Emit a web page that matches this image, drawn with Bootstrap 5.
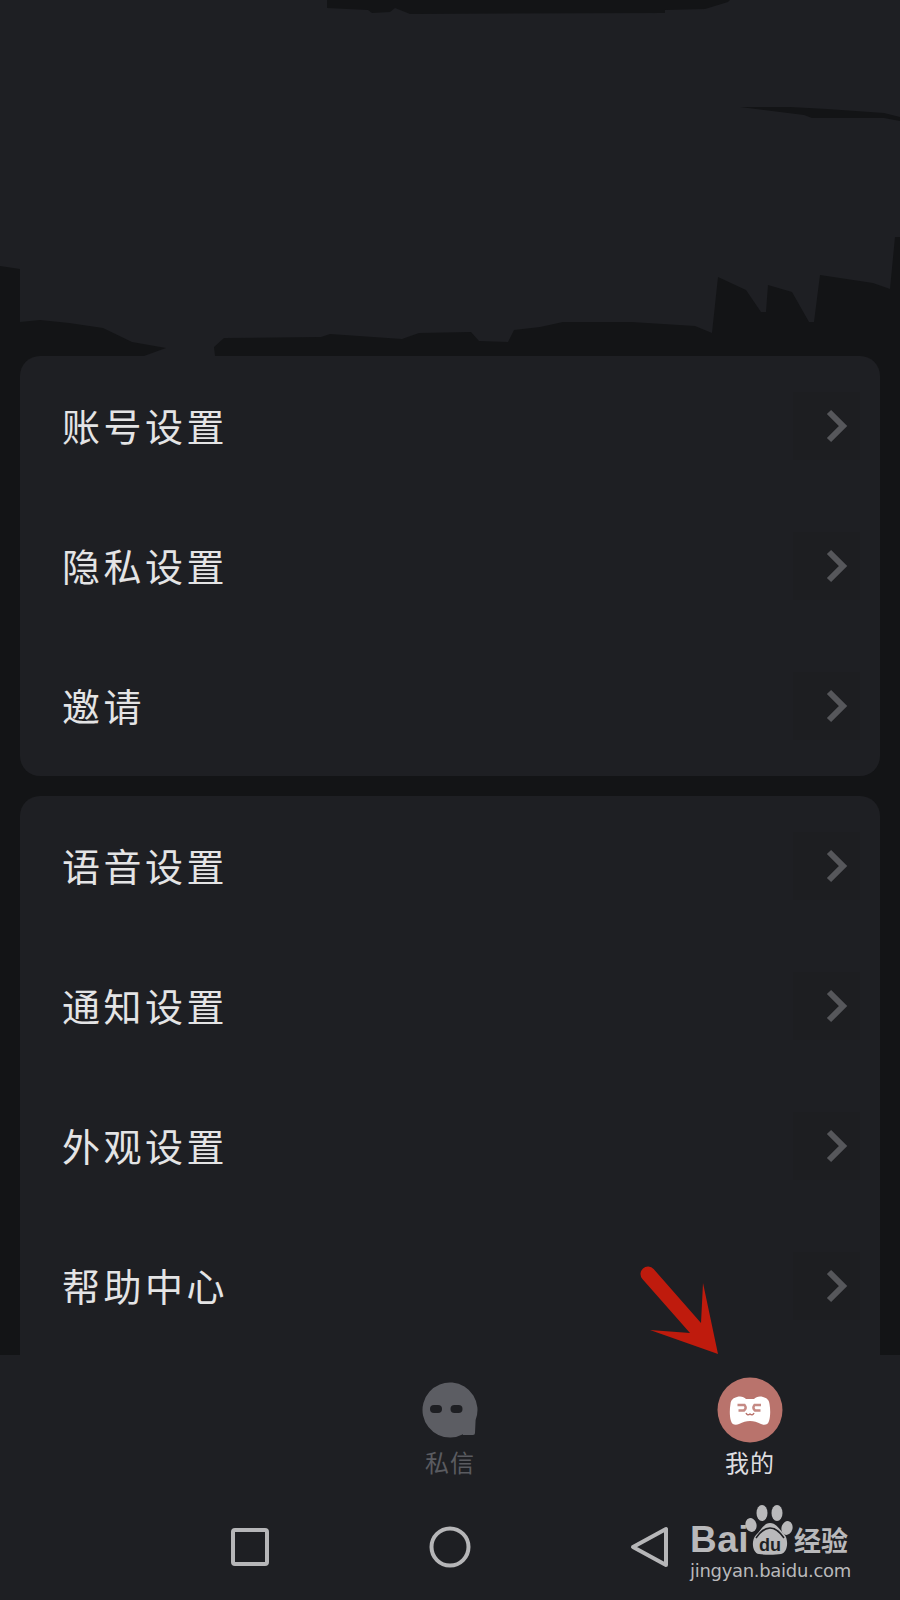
<!DOCTYPE html>
<html lang="zh-CN">
<head>
  <meta charset="UTF-8">
  <meta name="viewport" content="width=device-width, initial-scale=1.0">
  <title>设置</title>
  <link href="https://cdn.jsdelivr.net/npm/bootstrap@5.3.0/dist/css/bootstrap.min.css" rel="stylesheet">
  <style>
    body {
      background-color: #131416;
      font-family: "Noto Sans CJK SC", "Liberation Sans", sans-serif;
      height: 1600px;
      overflow: hidden;
    }
    .cover-art {
      display: block;
      width: 900px;
      height: 356px;
    }
    .menu-group {
      --bs-list-group-bg: #1e1f23;
      --bs-list-group-color: #e4e4e5;
      --bs-list-group-border-width: 0;
      --bs-list-group-border-radius: 20px;
      --bs-list-group-item-padding-x: 0;
      --bs-list-group-item-padding-y: 0;
      margin: 0 20px 20px;
    }
    /* second group runs on under the bottom bar */
    .menu-group-open {
      border-bottom-left-radius: 0;
      border-bottom-right-radius: 0;
    }
    .menu-row {
      height: 140px;
      padding-left: 42px !important;
      padding-right: 20px !important;
      font-size: 38px;
      letter-spacing: 3.5px;
      line-height: 1;
    }
    .menu-row span {
      margin-bottom: 2px;
    }
    .chevron-box {
      width: 67px;
      height: 68px;
      background-color: #1d1e21;
    }
    .chevron-box svg {
      display: block;
      width: 24px;
      height: 34px;
      margin-left: 20px;
    }
    .page-body {
      height: 1355px;
      overflow: hidden;
    }
    .bottom-bar {
      background-color: #1e1f23;
      height: 245px;
    }
    .tab-row {
      padding-top: 22px;
    }
    .tab-item {
      width: 300px;
    }
    .tab-icon {
      display: block;
      width: 66px;
      height: 66px;
    }
    .tab-label {
      font-size: 24px;
      line-height: 30px;
      margin-top: 4px;
      letter-spacing: 1px;
      color: #5a5b60;
    }
    .tab-label-on {
      color: #dedee0;
    }
    .soft-keys {
      padding-top: 48px;
    }
    .soft-key {
      width: 200px;
    }
    .soft-key svg {
      display: block;
      width: 44px;
      height: 44px;
    }
    .pointer-arrow {
      position: absolute;
      left: 635px;
      top: 1260px;
      width: 100px;
      height: 100px;
    }
    .watermark {
      position: absolute;
      left: 685px;
      top: 1500px;
      width: 175px;
      height: 90px;
      color: #b9b9bb;
    }
    .wm-bai {
      position: absolute;
      left: 5px;
      top: 18px;
      font: 700 37px/44px "Liberation Sans", sans-serif;
      letter-spacing: 0.5px;
    }
    .wm-paw {
      position: absolute;
      left: 58px;
      top: 3px;
      width: 54px;
      height: 54px;
    }
    .wm-du {
      position: absolute;
      left: 74px;
      top: 34px;
      width: 30px;
      font: 700 18px/22px "Liberation Sans", sans-serif;
      color: #1e1f23;
    }
    .wm-cn {
      position: absolute;
      left: 109px;
      top: 22px;
      font-size: 27px;
      line-height: 36px;
      font-weight: 700;
    }
    .wm-url {
      position: absolute;
      left: 5px;
      top: 58px;
      font: 400 18px/26px "DejaVu Sans", sans-serif;
      letter-spacing: -0.3px;
      white-space: nowrap;
    }
  </style>
</head>
<body>
  <div class="page-body">
    <svg class="cover-art" viewBox="0 0 900 356" aria-hidden="true">
      <rect width="900" height="356" fill="#1e1f23"/>
      <path fill="#131416" d="M327 0V8L368 10 372 13 390 12 395 8 410 14 665 13 665 10 705 9 728 2 730 0Z"/>
      <path fill="#131416" d="M740 107 804 115 812 118 884 118 900 121V117L884 113 827 109 790 107Z"/>
      <path fill="#131416" d="M0 266 20 269V322L40 320 69 323 103 328 132 342 166 348 144 356H215L214 347 224 338 321 337 330 334 402 339 419 333 471 332 479 341 508 342 514 330 540 327 563 322 631 322 695 326 712 333 718 277 746 290 761 312 766 312 768 285 792 292 809 322 814 322 820 275 873 283 890 289 895 237H900V356H0Z"/>
    </svg>

    <div class="list-group menu-group">
      <div class="list-group-item menu-row d-flex align-items-center justify-content-between">
        <span>账号设置</span>
        <div class="chevron-box d-flex align-items-center justify-content-center"><svg viewBox="0 0 24 34"><path d="M4 3 18 17 4 31" fill="none" stroke="#56575b" stroke-width="6"/></svg></div>
      </div>
      <div class="list-group-item menu-row d-flex align-items-center justify-content-between">
        <span>隐私设置</span>
        <div class="chevron-box d-flex align-items-center justify-content-center"><svg viewBox="0 0 24 34"><path d="M4 3 18 17 4 31" fill="none" stroke="#56575b" stroke-width="6"/></svg></div>
      </div>
      <div class="list-group-item menu-row d-flex align-items-center justify-content-between">
        <span>邀请</span>
        <div class="chevron-box d-flex align-items-center justify-content-center"><svg viewBox="0 0 24 34"><path d="M4 3 18 17 4 31" fill="none" stroke="#56575b" stroke-width="6"/></svg></div>
      </div>
    </div>

    <div class="list-group menu-group menu-group-open">
      <div class="list-group-item menu-row d-flex align-items-center justify-content-between">
        <span>语音设置</span>
        <div class="chevron-box d-flex align-items-center justify-content-center"><svg viewBox="0 0 24 34"><path d="M4 3 18 17 4 31" fill="none" stroke="#56575b" stroke-width="6"/></svg></div>
      </div>
      <div class="list-group-item menu-row d-flex align-items-center justify-content-between">
        <span>通知设置</span>
        <div class="chevron-box d-flex align-items-center justify-content-center"><svg viewBox="0 0 24 34"><path d="M4 3 18 17 4 31" fill="none" stroke="#56575b" stroke-width="6"/></svg></div>
      </div>
      <div class="list-group-item menu-row d-flex align-items-center justify-content-between">
        <span>外观设置</span>
        <div class="chevron-box d-flex align-items-center justify-content-center"><svg viewBox="0 0 24 34"><path d="M4 3 18 17 4 31" fill="none" stroke="#56575b" stroke-width="6"/></svg></div>
      </div>
      <div class="list-group-item menu-row d-flex align-items-center justify-content-between">
        <span>帮助中心</span>
        <div class="chevron-box d-flex align-items-center justify-content-center"><svg viewBox="0 0 24 34"><path d="M4 3 18 17 4 31" fill="none" stroke="#56575b" stroke-width="6"/></svg></div>
      </div>
    </div>
  </div>

  <div class="bottom-bar">
    <div class="tab-row d-flex">
      <div class="tab-item"></div>
      <div class="tab-item d-flex flex-column align-items-center">
        <svg class="tab-icon" viewBox="0 0 66 66">
          <path fill="#5c5d63" d="M58.600 43A27.500 27.500 0 1 0 46 57.200V58H56Q58 58 58 56Z"/>
          <rect x="13" y="28" width="12" height="8" rx="4" fill="#1e1f23"/>
          <rect x="33.500" y="28" width="12" height="8" rx="4" fill="#1e1f23"/>
        </svg>
        <div class="tab-label">私信</div>
      </div>
      <div class="tab-item d-flex flex-column align-items-center">
        <svg class="tab-icon" viewBox="0 0 66 66">
          <circle cx="33" cy="33" r="32.500" fill="#b9736c"/>
          <path fill="#fff" d="M20 20C24 19 27 20 29 22H37C39 20 42 19 46 20 50 21 52 23 52.500 27 53.500 33 53.500 39 52 44 51 48 47 48.500 44 47 40 45 37 44 33 44S26 45 22 47C19 48.500 15 48 14 44 12.500 39 12.500 33 13.500 27 14 23 16 21 20 20Z"/>
          <path fill="none" stroke="#c58a84" stroke-width="2.500" d="M20.500 28H27.500Q30 31 27 33.500H21.500M44 28H37.500Q35 31 38 33.500H43.500"/>
          <path fill="none" stroke="#b9736c" stroke-width="1.500" d="M29 36Q30.500 39 33 37 35.500 39 37 36"/>
        </svg>
        <div class="tab-label tab-label-on">我的</div>
      </div>
    </div>
    <div class="soft-keys d-flex justify-content-center">
      <div class="soft-key d-flex justify-content-center">
        <svg viewBox="0 0 44 44"><rect x="5" y="5" width="34" height="34" rx="2" fill="none" stroke="#b6b6b8" stroke-width="4"/></svg>
      </div>
      <div class="soft-key d-flex justify-content-center">
        <svg viewBox="0 0 44 44"><circle cx="22" cy="22" r="18.500" fill="none" stroke="#b6b6b8" stroke-width="4"/></svg>
      </div>
      <div class="soft-key d-flex justify-content-center">
        <svg viewBox="0 0 44 44"><path d="M38 4V40L5 22Z" fill="none" stroke="#b6b6b8" stroke-width="4" stroke-linejoin="round"/></svg>
      </div>
    </div>
  </div>

  <svg class="pointer-arrow" viewBox="0 0 100 100" aria-hidden="true">
    <path fill="#bf1b0d" d="M18.600 9 66 63 68 23 83 94 15 70 55 73 7.400 19A7.500 7.500 0 0 1 18.600 9Z"/>
  </svg>

  <div class="watermark">
    <span class="wm-bai">Bai</span>
    <svg class="wm-paw" viewBox="0 0 54 54" aria-hidden="true">
      <g fill="#b9b9bb">
        <ellipse cx="19" cy="10" rx="5.500" ry="8"/>
        <ellipse cx="34" cy="10" rx="5.500" ry="8"/>
        <ellipse cx="8" cy="22" rx="5.500" ry="7" transform="rotate(-15 8 22)"/>
        <ellipse cx="44" cy="25" rx="5.500" ry="7" transform="rotate(15 44 25)"/>
        <path d="M27 20C33 20 36 26 41 31 46 36 45 50 38 51 32 52 22 52 16 51 9 50 8 37 13 32 18 27 21 20 27 20Z"/>
      </g>
      <path d="M13 35C16 31 20 25 27 25 34 25 38 31 41 35" fill="none" stroke="#1e1f23" stroke-width="1.500"/>
    </svg>
    <span class="wm-du">du</span>
    <span class="wm-cn">经验</span>
    <span class="wm-url">jingyan.baidu.com</span>
  </div>
</body>
</html>
